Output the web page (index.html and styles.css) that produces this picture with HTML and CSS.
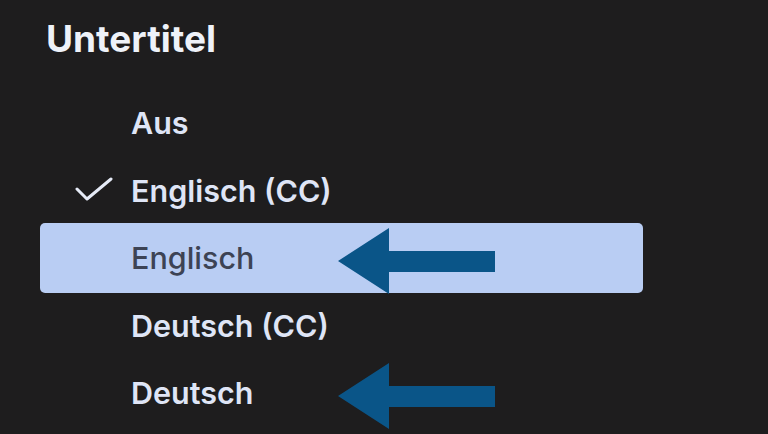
FILE: index.html
```html
<!DOCTYPE html>
<html lang="de">
<head>
    <meta charset="UTF-8">
    <meta name="viewport" content="width=device-width, initial-scale=1.0">
    <title>Untertitel</title>
    <link rel="stylesheet" href="styles.css">
</head>
<body>

    <h1 class="menu-title">Untertitel</h1>

    <ul class="subtitle-list">
        <li class="subtitle-item">Aus</li>
        <li class="subtitle-item is-checked">
            <!-- Häkchen für die aktive Spur -->
            <svg class="check" viewBox="0 0 38 24" width="38" height="24">
                <polyline points="2,12 12,22 36,2" fill="none" stroke="currentColor" stroke-width="3" stroke-linecap="round" stroke-linejoin="round"/>
            </svg>
            Englisch (CC)
        </li>
        <li class="subtitle-item is-focused">
            Englisch
            <svg class="arrow" viewBox="0 0 157 66" width="157" height="66">
                <path d="M0 33 L51 0 V23 H157 V44 H51 V66 Z" fill="currentColor"/>
            </svg>
        </li>
        <li class="subtitle-item">Deutsch (CC)</li>
        <li class="subtitle-item">
            Deutsch
            <svg class="arrow" viewBox="0 0 157 66" width="157" height="66">
                <path d="M0 33 L51 0 V23 H157 V44 H51 V66 Z" fill="currentColor"/>
            </svg>
        </li>
    </ul>

</body>
</html>
```

FILE: styles.css
```css
body {
    margin: 0;
    height: 434px;
    overflow: hidden;
    font-family: 'Inter', 'Noto Sans', sans-serif;
    background-color: #1e1d1e; /* dunkler Hintergrund */
    color: #dfe5f6;
}
.menu-title {
    margin: 0;
    padding: 17px 0 0 46px;
    font-size: 37px;
    line-height: 44px;
    font-weight: 700;
    color: #eef2f9;
}
.subtitle-list {
    list-style: none;
    margin: 27.75px 0 0 40px;
    padding: 0;
    width: 603px;
}
.subtitle-item {
    position: relative;
    display: flex;
    align-items: center;
    height: 67.5px;
    padding-left: 91px;
    font-size: 30.5px;
    font-weight: 600;
}
.check {
    position: absolute;
    left: 35px;
    top: calc(50% - 13px);
    color: #e6ebf7;
}
/* fokussierte Zeile */
.is-focused {
    height: 70px;
    margin: -1.25px 0;
    border-radius: 5px;
    background-color: #b9cdf3;
    color: #3d4354;
    font-weight: 500;
}
.arrow {
    position: absolute;
    left: 298px;
    top: calc(50% - 30px);
    color: #0a5588;
}
```
